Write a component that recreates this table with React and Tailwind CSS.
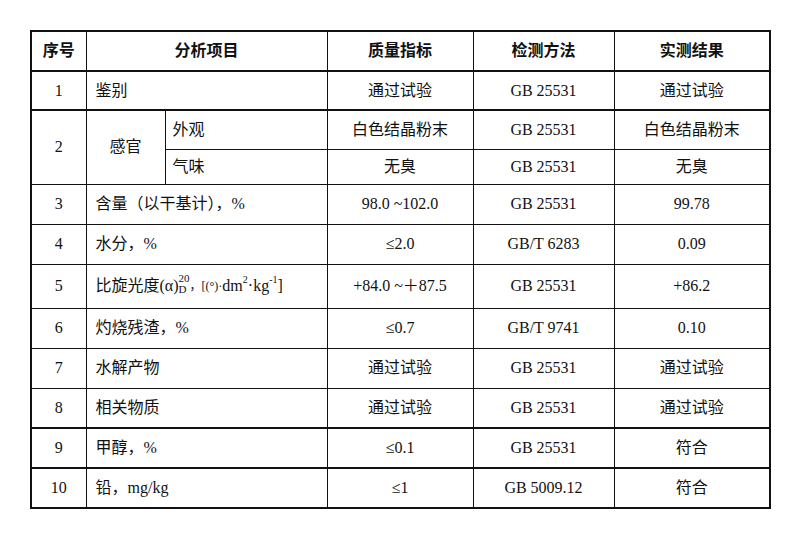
const font = { fontFamily: "'Liberation Serif', 'Noto Sans CJK SC', serif" };

const rows = [
  { no: '3', item: '含量（以干基计），%', spec: '98.0 ~102.0', method: 'GB 25531', result: '99.78', h: 'h-[40px]' },
  { no: '4', item: '水分，%', spec: '≤2.0', method: 'GB/T 6283', result: '0.09', h: 'h-[40px]' },
  { no: '5', item: 'rotation', spec: '+84.0 ~＋87.5', method: 'GB 25531', result: '+86.2', h: 'h-[44px]' },
  { no: '6', item: '灼烧残渣，%', spec: '≤0.7', method: 'GB/T 9741', result: '0.10', h: 'h-[40px]' },
  { no: '7', item: '水解产物', spec: '通过试验', method: 'GB 25531', result: '通过试验', h: 'h-[40px]' },
  { no: '8', item: '相关物质', spec: '通过试验', method: 'GB 25531', result: '通过试验', h: 'h-[40px]' },
  { no: '9', item: '甲醇，%', spec: '≤0.1', method: 'GB 25531', result: '符合', h: 'h-[40px]', thick: true },
  { no: '10', item: '铅，mg/kg', spec: '≤1', method: 'GB 5009.12', result: '符合', h: 'h-[40px]', thick: true },
];

function Rotation() {
  return (
    <span className="inline-flex items-center">
      比旋光度(α)
      <span className="inline-flex flex-col text-[11px] leading-[11px] -mt-1">
        <span>20</span>
        <span>D</span>
      </span>
      <span className="text-[12px]">，[(°)·</span>
      <span>dm</span>
      <sup className="text-[10px] -top-[6px]">2</sup>
      <span>·kg</span>
      <sup className="text-[10px] -top-[6px]">-1</sup>
      <span>]</span>
    </span>
  );
}

const cell = 'border border-[#111] text-center align-middle';

export default function App() {
  return (
    <div className="w-[800px] h-[538px] bg-white pt-[30px] pl-[30px] text-[#111] text-[16px]" style={font}>
      <table className="table-fixed border-collapse w-[739px] border-2 border-[#111]">
        <colgroup>
          <col className="w-[55px]" />
          <col className="w-[79px]" />
          <col className="w-[162px]" />
          <col className="w-[146px]" />
          <col className="w-[141px]" />
          <col className="w-[156px]" />
        </colgroup>
        <tbody>
          <tr className="h-[40px] font-bold">
            <td className={`${cell} border-b-2`}>序号</td>
            <td className={`${cell} border-b-2`} colSpan={2}>分析项目</td>
            <td className={`${cell} border-b-2`}>质量指标</td>
            <td className={`${cell} border-b-2`}>检测方法</td>
            <td className={`${cell} border-b-2`}>实测结果</td>
          </tr>
          <tr className="h-[39px]">
            <td className={`${cell} border-b-2`}>1</td>
            <td className={`${cell} border-b-2 text-left pl-[9px]`} colSpan={2}>鉴别</td>
            <td className={`${cell} border-b-2`}>通过试验</td>
            <td className={`${cell} border-b-2`}>GB 25531</td>
            <td className={`${cell} border-b-2`}>通过试验</td>
          </tr>
          <tr className="h-[39px]">
            <td className={cell} rowSpan={2}>2</td>
            <td className={cell} rowSpan={2}>感官</td>
            <td className={`${cell} text-left pl-[7px]`}>外观</td>
            <td className={cell}>白色结晶粉末</td>
            <td className={cell}>GB 25531</td>
            <td className={cell}>白色结晶粉末</td>
          </tr>
          <tr className="h-[35px]">
            <td className={`${cell} text-left pl-[7px]`}>气味</td>
            <td className={cell}>无臭</td>
            <td className={cell}>GB 25531</td>
            <td className={cell}>无臭</td>
          </tr>
          {rows.map((r) => (
            <tr key={r.no} className={r.h}>
              <td className={`${cell} ${r.thick ? 'border-t-2' : ''}`}>{r.no}</td>
              <td className={`${cell} ${r.thick ? 'border-t-2' : ''} text-left pl-[9px]`} colSpan={2}>
                {r.item === 'rotation' ? <Rotation /> : r.item}
              </td>
              <td className={`${cell} ${r.thick ? 'border-t-2' : ''}`}>{r.spec}</td>
              <td className={`${cell} ${r.thick ? 'border-t-2' : ''}`}>{r.method}</td>
              <td className={`${cell} ${r.thick ? 'border-t-2' : ''}`}>{r.result}</td>
            </tr>
          ))}
        </tbody>
      </table>
    </div>
  );
}
